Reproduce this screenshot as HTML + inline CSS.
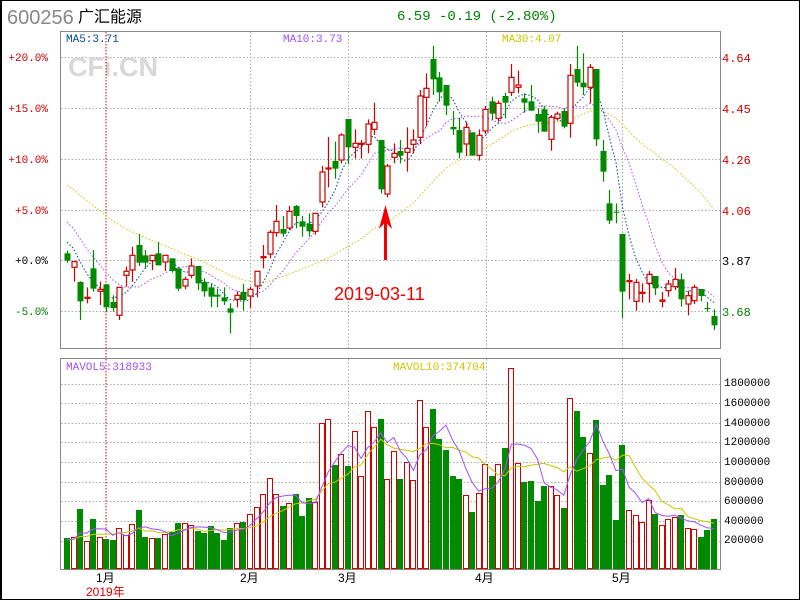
<!DOCTYPE html>
<html><head><meta charset="utf-8">
<style>
html,body{margin:0;padding:0;background:#fff;}
#w{position:relative;width:800px;height:600px;overflow:hidden;font-family:"Liberation Mono","Noto Sans CJK SC",monospace;}
svg{position:absolute;left:0;top:0;}
</style></head><body>
<div id="w">
<svg id="s" width="800" height="600" xmlns="http://www.w3.org/2000/svg" font-family="Liberation Mono, Noto Sans CJK SC, monospace">
<rect x="0.5" y="0.5" width="799" height="599" fill="#fff" stroke="#000"/>
<line x1="1" y1="0" x2="1" y2="600" stroke="#000" stroke-width="2"/>
<text x="7" y="24" font-family="Liberation Sans, sans-serif" font-size="20" fill="#888">600256</text>
<text x="78" y="22" font-family="Noto Sans CJK SC, sans-serif" font-size="16" fill="#000">广汇能源</text>
<text x="397" y="20" font-size="14" fill="#008000">6.59 -0.19 (-2.80%)</text>
<g id="grid" stroke="#aaa" stroke-dasharray="1.5,2" stroke-width="1"></g>
<text x="68" y="76" font-family="Liberation Sans, sans-serif" font-weight="bold" font-size="27" fill="#d8d8d8">CFi.CN</text>
<line x1="106" y1="32" x2="106" y2="570" stroke="#e00" stroke-dasharray="1.5,1.5"/>
<rect x="60.5" y="31.5" width="660" height="317" fill="none" stroke="#888"/>
<rect x="60.5" y="358.5" width="660" height="211" fill="none" stroke="#888"/>
<text x="66" y="42" font-size="11" fill="#004a96">MA5:3.71</text>
<text x="283" y="42" font-size="11" fill="#a050ff">MA10:3.73</text>
<text x="502" y="42" font-size="11" fill="#c8c800">MA30:4.07</text>
<text x="66" y="370" font-size="11" fill="#a050ff">MAVOL5:318933</text>
<text x="393" y="370" font-size="11" fill="#c8c800">MAVOL10:374704</text>
<g font-size="11" fill="#d00000" text-anchor="end">
<text x="48" y="61">+20.0%</text><text x="48" y="112">+15.0%</text><text x="48" y="163">+10.0%</text><text x="48" y="214">+5.0%</text>
<text x="48" y="264" fill="#000">+0.0%</text><text x="48" y="315" fill="#008000">-5.0%</text>
</g>
<g font-size="12" fill="#d00000">
<text x="722" y="62">4.64</text><text x="722" y="113">4.45</text><text x="722" y="164">4.26</text><text x="722" y="215">4.06</text>
<text x="722" y="265" fill="#000">3.87</text><text x="722" y="316" fill="#008000">3.68</text>
</g>
<g font-size="11" fill="#000">
<text x="724" y="386">1800000</text><text x="724" y="406">1600000</text><text x="724" y="426">1400000</text><text x="724" y="445">1200000</text>
<text x="724" y="465">1000000</text><text x="724" y="485">800000</text><text x="724" y="504">600000</text><text x="724" y="524">400000</text><text x="724" y="543">200000</text>
</g>
<g font-family="Liberation Sans, Noto Sans CJK SC, sans-serif" font-size="12" fill="#000">
<text x="96" y="582">1月</text><text x="240" y="582">2月</text><text x="338" y="582">3月</text><text x="475" y="582">4月</text><text x="612" y="582">5月</text>
<text x="86" y="596" fill="#e00000">2019年</text>
</g>
<g id="c"></g>
<g fill="#f00000"><rect x="384" y="222" width="3" height="38"/><polygon points="385.5,205 379,229 385.5,222 392,229"/></g>
<text x="334" y="300" font-family="Liberation Sans, sans-serif" font-size="18" fill="#f00000">2019-03-11</text>
</svg>
</div>
<script>
var Z4=[['g',490,512,482,518],['r',515,532,512,575],['g',576,634,574,690],['r',622,624,592,640],['g',535,596,480,605],['r',598,604,575,645],['g',583,652,583,665],['g',636,654,616,665],['r',592,676,592,690],['r',544,556,530,590],['r',496,540,470,575],['g',465,518,432,528],['g',496,518,480,535],['r',496,512,496,540],['g',490,526,456,526],['r',496,516,496,543],['g',505,543,505,548],['g',535,596,535,603],['r',568,588,560,598],['r',528,556,505,565],['g',528,580,528,600],['g',576,604,565,620],['g',592,620,580,652],['g',614,620,596,652],['g',622,634,592,645],['g',655,668,640,730],['r',616,628,604,652],['g',606,630,582,662],['r',598,618,590,654],['r',544,588,544,622],['r',500,502,465,535],['r',427,492,420,505],['r',394,428,345,440],['g',417,431,378,440],['r',364,414,348,420],['g',348,378,345,415],['g',394,410,378,440],['g',402,424,370,440],['r',370,424,370,434],['r',246,336,228,352],['r',234,236,141,292],['g',213,236,155,266],['r',135,210,130,220],['g',87,172,87,222],['r',160,172,118,206],['r',160,163,150,206],['r',102,163,88,190],['r',97,118,38,135],['g',150,298,150,310],['r',228,312,222,322]];
var Z5=[['r',340,352,310,370],['g',333,347,300,370],['r',325,337,262,395],['r',300,313,268,340],['r',168,292,150,312],['r',145,172,100,260],['g',57,118,18,165],['g',112,157,96,185],['g',135,197,135,225],['g',261,268,213,285],['g',270,338,233,355],['r',262,312,245,348],['g',277,347,277,347],['r',286,346,268,362],['r',208,273,198,282],['g',184,221,170,240],['r',190,235,182,245],['g',168,188,158,235],['r',112,157,72,168],['r',135,142,92,160],['g',175,188,160,218],['g',184,212,135,212],['g',222,245,205,278],['g',208,275,198,275],['r',232,298,225,332],['r',222,235,215,242],['g',213,260,205,265],['r',106,250,72,293],['g',87,128,18,140],['g',128,142,40,165],['r',82,142,72,190],['g',87,298,87,318],['g',333,395,300,425],['g',490,542,450,552],['g',515,517,490,550],['g',582,755,582,835],['r',722,724,702,778],['r',727,784,717,812],['r',757,759,730,788],['r',703,730,693,788],['g',708,745,708,765],['r',780,784,756,802],['r',732,752,720,770],['r',718,740,684,750],['g',718,778,700,800],['r',767,792,752,826],['r',742,782,734,792],['g',747,768,747,784],['g',804,806,786,815],['g',828,856,808,870]];
var C=[];
Z4.forEach(function(a){C.push([a[0],90+a[1]/3,90+a[2]/3,90+a[3]/3,90+a[4]/3]);});
Z5.forEach(function(a){C.push([a[0],40+a[1]/3,40+a[2]/3,40+a[3]/3,40+a[4]/3]);});
var V3=[624,622,537,633,567,622,627,630,595,614,583,540,621,625,624,612,605,579,580,586,603,609,588,609,630,594,580,576,552,532,492,445,493,528,520,493,558,505,515,280,268,405,372,408,304,438,243,290,267,448];
var V6=[289,372,322,376,136,216,162,252,285,363,372,421,471,415,328,363,328,279,40,325,381,378,438,393,393,421,459,130,168,246,295,195,390,360,495,270,466,481,502,436,477,511,493,485,480,520,522,546,524,492];
var V=V3.map(function(y){return 330+y/3;}).concat(V6.map(function(y){return 355+y/3;}));
var NS='http://www.w3.org/2000/svg';
function el(p,t,at){var e=document.createElementNS(NS,t);for(var k in at)e.setAttribute(k,at[k]);p.appendChild(e);return e;}
var g=document.getElementById('grid');
[57,108,159,210,260,311].forEach(function(y){el(g,'line',{x1:61,x2:720,y1:y+.5,y2:y+.5});});
[384,403,423,442,462,482,501,521,541].forEach(function(y){el(g,'line',{x1:61,x2:720,y1:y+.5,y2:y+.5});});
[250,348,486,622].forEach(function(x){el(g,'line',{x1:x+.5,x2:x+.5,y1:32,y2:348});el(g,'line',{x1:x+.5,x2:x+.5,y1:359,y2:569});});
var c=document.getElementById('c');
function X(i){return 67+i*6.535;}
var RED='#d00000',GRN='#008a00';
var N=Math.min(V.length,C.length);
for(var i=0;i<N;i++){var x=Math.round(X(i))-3,t=Math.round(V[i]);
 if(C[i][0]=='g')el(c,'rect',{x:x,y:t,width:6,height:569-t,fill:GRN});
 else el(c,'rect',{x:x+.5,y:t+.5,width:5,height:568-t,fill:'#fff',stroke:RED});}
var cl=C.map(function(a){return a[0]=='g'?a[2]:a[1];});
var pre=[];for(var k=0;k<20;k++)pre.push(130+k*3.9);
pre=pre.concat([195,198,200,205,210,230,235,240,245]);
var all=pre.concat(cl);
function ma(arr,n,off){var pts=[];for(var i=0;i<arr.length-off;i++){var s=0,m=0;for(var j=Math.max(0,i+off-n+1);j<=i+off;j++){s+=arr[j];m++;}pts.push(X(i).toFixed(1)+','+(s/m).toFixed(1));}return pts.join(' ');}
function line(p,col,dash){var a={points:p,fill:'none',stroke:col,'stroke-width':1};if(dash)a['stroke-dasharray']=dash;el(c,'polyline',a);}
line(ma(all,30,29),'#c8c800','1.5,2');
line(ma(all,10,29),'#a050ff','1.5,2');
line(ma(all,5,29),'#004a96','1.5,2');
var vpre=[];for(k=0;k<9;k++)vpre.push(540);
var vall=vpre.concat(V);
line(ma(vall,10,9),'#c8c800');
line(ma(vall,5,9),'#a050ff');
for(i=0;i<C.length;i++){var a=C[i],cx=Math.round(X(i));
 var col=a[0]=='g'?GRN:RED;
 el(c,'line',{x1:cx+.5,x2:cx+.5,y1:a[3],y2:a[4],stroke:col,'stroke-width':1.2});
 var h=Math.max(1,a[2]-a[1]);
 if(a[0]=='g')el(c,'rect',{x:cx-2.5,y:a[1],width:6,height:h,fill:GRN});
 else el(c,'rect',{x:cx-2,y:a[1],width:5,height:h,fill:'#fff',stroke:RED,'stroke-width':1.2});}
</script>
</body></html>
